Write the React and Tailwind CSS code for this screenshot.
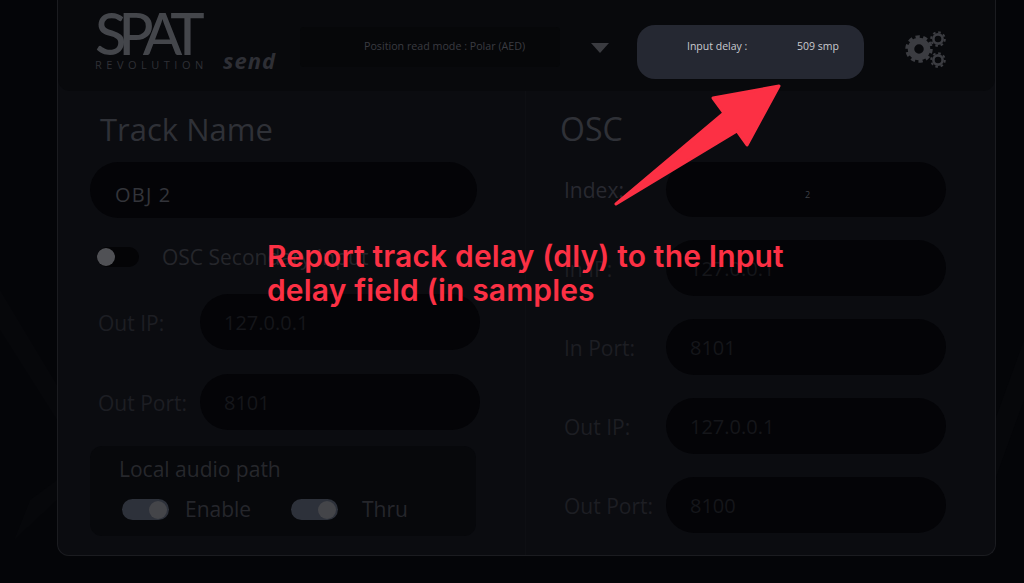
import React from "react";

const font = { fontFamily: '"Open Sans", sans-serif' };

function Field({ label, value, labelClass = "text-[#1d1e23]", valueClass = "text-[#15161a]", className = "", labelWidth = "w-[102px]", inputHeight = "h-[56px]" }) {
  return (
    <div className={`flex items-center ${className}`}>
      <span className={`${labelWidth} shrink-0 whitespace-nowrap pt-[2px] text-[21px] leading-none ${labelClass}`}>{label}</span>
      <div className={`${inputHeight} flex w-[280px] items-center rounded-[28px] bg-[#040407] pl-[24px] pt-[2px] text-[20px] ${valueClass}`}>
        {value}
      </div>
    </div>
  );
}

function Toggle() {
  return (
    <div className="flex h-[21px] w-[47px] items-center justify-end rounded-full bg-[#2d313a] pr-[2px]">
      <div className="size-[18px] rounded-full bg-[#444549]" />
    </div>
  );
}

function Gears() {
  const c = "#3b3c41";
  return (
    <svg className="mb-[4px] ml-[41px]" width="41" height="38" viewBox="0 0 41 38" fill="none">
      <circle cx="14" cy="18" r="8" stroke={c} strokeWidth="6.5" />
      <circle cx="14" cy="18" r="12" stroke={c} strokeWidth="3.5" strokeDasharray="4.2 3.34" />
      <circle cx="33" cy="8" r="4.6" stroke={c} strokeWidth="2.6" />
      <circle cx="33" cy="8" r="6.8" stroke={c} strokeWidth="2" strokeDasharray="2.6 2.74" />
      <circle cx="33" cy="29" r="4.6" stroke={c} strokeWidth="2.6" />
      <circle cx="33" cy="29" r="6.8" stroke={c} strokeWidth="2" strokeDasharray="2.6 2.74" />
    </svg>
  );
}

export default function App() {
  return (
    <div className="relative h-[583px] w-[1024px] overflow-hidden bg-[#040508] pl-[57px]" style={font}>
      <svg className="absolute inset-0" width="1024" height="583" viewBox="0 0 1024 583" fill="none">
        <path d="M0 290 L57 385 L57 420 L0 330 Z" fill="#06070a" />
        <path d="M30 500 L57 480 L57 500 L14 540 Z" fill="#06070a" />
        <path d="M995 420 L1024 340 L1024 400 L995 480 Z" fill="#06070a" />
      </svg>

      <div className="relative flex h-[556px] w-[939px] flex-col rounded-b-xl border-x border-b border-[#1b1c20] bg-[#0b0c10]">
        <header className="flex h-[91px] items-center rounded-b-xl bg-[#08090c] pt-[12px]">
          <div className="mb-[24px] ml-[37px] flex w-[205px] items-end">
            <div className="flex w-[128px] flex-col">
              <span className="h-[48px] text-[58px] leading-[48px] font-medium tracking-[-8px] text-[#44464b]" style={{ fontFamily: '"Lato", sans-serif' }}>SPAT</span>
              <span className="mt-[2px] whitespace-nowrap text-[11px] leading-[12px] tracking-[4.5px] text-[#2f3036]">REVOLUTION</span>
            </div>
            <span className="text-[22px] leading-[22px] font-bold italic tracking-[1px] text-[#2e2f35]">send</span>
          </div>
          <div className="mb-[10px] flex h-[40px] w-[260px] items-center rounded-sm bg-[#060709] pl-[64px] text-[10.7px] whitespace-nowrap text-[#3a3b41]">
            Position read mode : Polar (AED)
          </div>
          <svg className="mb-[8px] ml-[31px]" width="18" height="10" viewBox="0 0 18 10">
            <path d="M0 0 H18 L9 10 Z" fill="#3a3b40" />
          </svg>
          <div className="ml-[28px] flex h-[54px] w-[227px] items-center rounded-[18px] bg-[#252832] pb-[10px] text-[10.5px] text-[#c9cacf]">
            <span className="ml-[50px] w-[110px] whitespace-nowrap">Input delay :</span>
            <span className="whitespace-nowrap">509 smp</span>
          </div>
          <Gears />
        </header>

        <div className="grid flex-1 grid-cols-[468px_1fr]">
          <section className="flex flex-col border-r border-[#0e0f13] pl-[32px]">
            <h2 className="mt-[18px] h-[40px] pl-[10px] text-[31px] leading-[40px] text-[#2f3137]">Track Name</h2>
            <div className="mt-[13px] flex h-[56px] w-[387px] items-center rounded-[28px] bg-[#040407] pl-[25px] pt-[10px] text-[20px] tracking-[1.2px] text-[#33343a]">OBJ 2</div>
            <div className="mt-[29px] ml-[7px] flex h-[20px] items-center">
              <div className="flex h-[20px] w-[42px] items-center rounded-full bg-[#040406]">
                <div className="size-[18px] rounded-full bg-[#505155]" />
              </div>
              <span className="ml-[23px] whitespace-nowrap text-[21px] leading-none text-[#25262b]">OSC Secondary Input</span>
            </div>
            <Field className="mt-[27px] ml-[8px]" label="Out IP:" value="127.0.0.1" />
            <Field className="mt-[24px] ml-[8px]" label="Out Port:" value="8101" />
            <div className="mt-[16px] h-[90px] w-[386px] rounded-xl bg-[#07080b] pl-[29px] pt-[10px]">
              <div className="whitespace-nowrap text-[21px] leading-[26px] text-[#26272c]">Local audio path</div>
              <div className="mt-[17px] ml-[3px] flex items-center text-[21px] leading-none text-[#25262b]">
                <Toggle />
                <span className="ml-[16px] w-[106px]">Enable</span>
                <Toggle />
                <span className="ml-[24px]">Thru</span>
              </div>
            </div>
          </section>

          <section className="flex flex-col pl-[34px]">
            <h2 className="mt-[18px] h-[40px] text-[32px] leading-[40px] text-[#2f3137]">OSC</h2>
            <div className="ml-[4px] mt-[13px] flex flex-col gap-[23px]">
              <Field
                label="Index:"
                labelClass="text-[#282930]"
                inputHeight="h-[55px]"
                value={<span className="ml-[115px] pt-[8px] text-[9px] text-[#3f4046]">2</span>}
              />
              <Field label="In IP:" value="127.0.0.1" />
              <Field label="In Port:" value="8101" />
              <Field label="Out IP:" value="127.0.0.1" />
              <Field label="Out Port:" value="8100" />
            </div>
          </section>
        </div>
      </div>

      <svg className="absolute left-0 top-0" width="1024" height="583" viewBox="0 0 1024 583" fill="none">
        <path
          d="M779 86 L713 98 L724 113 L616 204 L737 131 L747 145 Z"
          fill="#fc3044"
          stroke="#fc3044"
          strokeWidth="3"
          strokeLinejoin="round"
        />
      </svg>

      <p
        className="absolute left-[267px] top-[239px] w-[540px] text-[30px] leading-[34px] font-semibold tracking-[0.15px] text-[#fc3044]"
        style={{ fontFamily: '"Inter", sans-serif' }}
      >
        Report track delay (dly) to the Input delay field (in samples
      </p>
    </div>
  );
}
